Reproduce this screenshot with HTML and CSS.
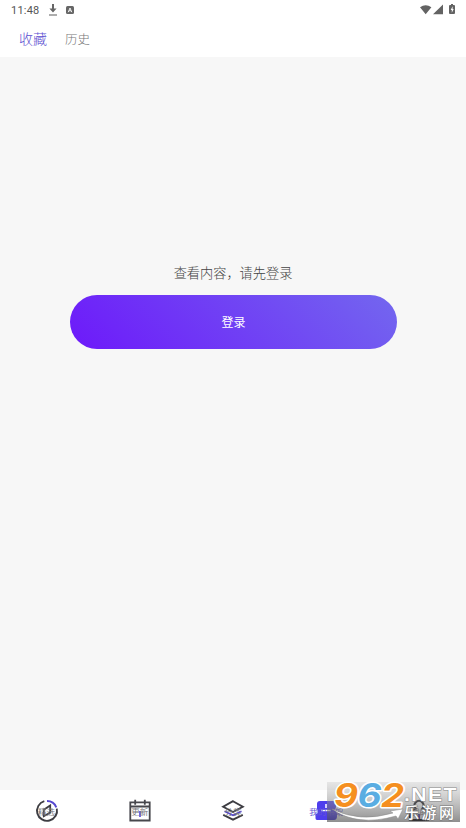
FILE: index.html
```html
<!DOCTYPE html>
<html lang="zh-CN">
<head>
    <meta charset="UTF-8">
    <title>收藏</title>
    <link rel="stylesheet" href="styles.css">
</head>
<body>
<div class="wrap">
    <div class="status">
        <span class="time">11:48</span>
        <svg class="download" width="10" height="12" viewBox="0 0 10 12"><path d="M1 11h8" stroke="#777" stroke-width="1.2"/><path d="M4 0h2v4.5h2.6L5 8.6 1.4 4.5H4z" fill="#666"/></svg>
        <svg class="app" width="8" height="8" viewBox="0 0 8 8"><rect width="8" height="8" rx="1.5" fill="#666"/><path d="M2.2 6.2 4 2l1.8 4.2M3 4.8h2" fill="none" stroke="#fff" stroke-width=".9"/></svg>
        <svg class="signal" width="36" height="12" viewBox="0 0 36 12">
            <path d="M0 3.2Q5.7-.8 11.4 3.2L5.7 10.2zM13 10.2h10V.4z" fill="#636363"/>
            <path d="M30 1h1V0h2v1h1q1 0 1 1v7q0 1-1 1h-4q-1 0-1-1V2q0-1 1-1z" fill="#636363"/>
            <path d="M32.6 2.3 30.7 6h1.1v2.7L33.7 5h-1.1z" fill="#fff"/>
        </svg>
    </div>
    <div class="tabs">
        <span class="tab on">收藏</span>
        <span class="tab">历史</span>
    </div>
    <div class="content">
        <p class="tip">查看内容，请先登录</p>
        <button class="login" type="button">登录</button>
    </div>
    <div class="nav">
        <div class="item">
            <svg class="icon" width="24" height="24" viewBox="0 0 24 24">
                <path d="M9.3 2.2A10 10 0 1 0 21.8 9.6" fill="none" stroke="#3d3d42" stroke-width="1.9"/>
                <path d="M12 2A10 10 0 0 1 21.3 8.3" fill="none" stroke="#5548d0" stroke-width="1.9"/>
                <path d="M15.2 6.5v7L8.8 17.2v-6.500z" fill="none" stroke="#3d3d42" stroke-width="1.8"/>
            </svg>
            <span class="label">精选</span>
        </div>
        <div class="item">
            <svg class="icon" width="24" height="24" viewBox="0 0 24 24">
                <path d="M2.3 3.3h19.4v18.2H2.3zM2 7.5h20M7.2.8v5M16.8.8v5" fill="none" stroke="#47474c" stroke-width="1.8"/>
                <path d="M12 12v6" stroke="#6558df" stroke-width="1.8"/>
            </svg>
            <span class="label">更新</span>
        </div>
        <div class="item">
            <svg class="icon" width="24" height="24" viewBox="0 0 24 24">
                <path d="M12 2.2 21.8 7.8 12 13 2.2 7.8zM2.2 15.8 12 20.6l9.8-4.8" fill="none" stroke="#3d3d42" stroke-width="1.9"/>
                <path d="M3.5 12.2 12 16.3l8.5-4.1" fill="none" stroke="#5548d0" stroke-width="1.5"/>
            </svg>
            <span class="label">分类</span>
        </div>
        <div class="item">
            <svg class="icon" width="24" height="24" viewBox="0 0 24 24">
                <path d="M6 2h13q3 0 3 3v3q0 2-2 3 3 1 3 4v2q0 4-3 4H3q-1.5 0-1.5-1.8v-3q0-1.7 2-1.9v-3.5Q3 11 3 9.5V5q0-3 3-3z" fill="#4e3eed"/>
                <path d="M12 5v4M7 11.5h10" fill="none" stroke="#fff" stroke-width="1.5"/>
            </svg>
            <span class="label on">我的书架</span>
        </div>
        <div class="item">
            <svg class="icon" width="24" height="24" viewBox="0 0 24 24">
                <path d="M8.5 9.5a4.6 4.6 0 1 1 7 0q5 2 5.5 7v4.5H3v-4.5q.5-5 5.5-7z" fill="none" stroke="#111116" stroke-width="2.2"/>
                <path d="M12 15v5" stroke="#2c1cb4" stroke-width="1.8"/>
            </svg>
            <span class="label">我的</span>
        </div>
    </div>
    <svg class="mark" width="133" height="40" viewBox="0 0 133 40">
        <defs>
            <linearGradient id="plate" x1="0" y1="0" x2="0" y2="1">
                <stop offset="0" stop-color="#ccc" stop-opacity=".4"/>
                <stop offset=".5" stop-color="#888" stop-opacity=".5"/>
                <stop offset="1" stop-color="#444" stop-opacity=".6"/>
            </linearGradient>
        </defs>
        <rect width="133" height="40" fill="url(#plate)"/>
        <path d="M5 27Q33 41 66 31l-3-2 13-2-5 10-2-3Q30 45 5 27z" fill="#fff" stroke="#888" stroke-width=".5"/>
        <g class="digits">
            <text x="7" y="25" textLength="24" lengthAdjust="spacingAndGlyphs" fill="#f58f20">9</text>
            <text x="30.5" y="25" textLength="24" lengthAdjust="spacingAndGlyphs" fill="#5aade2">6</text>
            <text x="54" y="25" textLength="23" lengthAdjust="spacingAndGlyphs" fill="#f58f20">2</text>
        </g>
        <text class="net" x="77" y="18.5" textLength="54" lengthAdjust="spacingAndGlyphs">.NET</text>
        <text class="site" x="77" y="36" textLength="50">乐游网</text>
    </svg>
</div><!-- class="wrap" -->
</body>
</html>
```
FILE: styles.css
```css
body{
    margin:0;
    font-family:"Noto Sans CJK SC","Liberation Sans",sans-serif;
    font-weight:300;
}
.wrap{
    position:relative;
    display:flex;
    flex-direction:column;
    width:466px;
    height:828px;
    overflow:hidden;
    background:#fff;
}
.status{
    display:flex;
    align-items:center;
    box-sizing:border-box;
    height:20px;
    padding:0 10px 0 11px;
}
.time{
    width:37px;
    font:11px Roboto,sans-serif;
    letter-spacing:.2px;
    color:#555;
}
.app{
    margin-left:8px;
}
.signal{
    margin-left:auto;
}
.tabs{
    display:flex;
    align-items:center;
    box-sizing:border-box;
    height:37px;
    padding:0 0 1px 19px;
    gap:18px;
}
.tab{
    padding-top:1px;
    font-size:12.5px;
    line-height:20px;
    color:#777;
}
.tab.on{
    padding-top:0;
    font-size:14px;
    color:#5a4bd0;
}
.content{
    display:flex;
    flex-direction:column;
    align-items:center;
    flex:1;
    background:#f7f7f7;
}
.tip{
    margin:206px 0 12px;
    font-size:13.2px;
    line-height:20px;
    color:#444;
}
.login{
    width:327px;
    height:54px;
    padding:0 0 2px 1px;
    border:0;
    border-radius:27px;
    background:linear-gradient(45deg,#6d19fa,#7367ef);
    font:400 12px "Noto Sans CJK SC",sans-serif;
    color:#fff;
}
.nav{
    display:flex;
    height:38px;
    background:#fff;
}
.item{
    display:grid;
    flex:1;
    place-items:center;
    padding-top:4px;
}
/* 图标和文字叠在同一格 */
.icon,.label{
    grid-area:1/1;
}
.label{
    font-size:8.5px;
    font-weight:400;
    line-height:12px;
    color:#77777c;
}
.label.on{
    color:#6557d2;
}
.mark{
    position:absolute;
    left:327px;
    top:782px;
    overflow:visible;
}
.digits{
    font:italic 700 32px Inter,"Liberation Sans",sans-serif;
    stroke:#fff;
    stroke-width:3px;
    stroke-linejoin:round;
    paint-order:stroke;
}
.net{
    font:bold 19px "Liberation Sans",sans-serif;
    letter-spacing:1.3px;
    fill:#fff;
    stroke:#888;
    stroke-width:1px;
    paint-order:stroke;
}
.site{
    font:500 15px "Noto Sans CJK SC",sans-serif;
    fill:#fff;
    stroke:#777;
    stroke-width:1px;
    paint-order:stroke;
}
```
